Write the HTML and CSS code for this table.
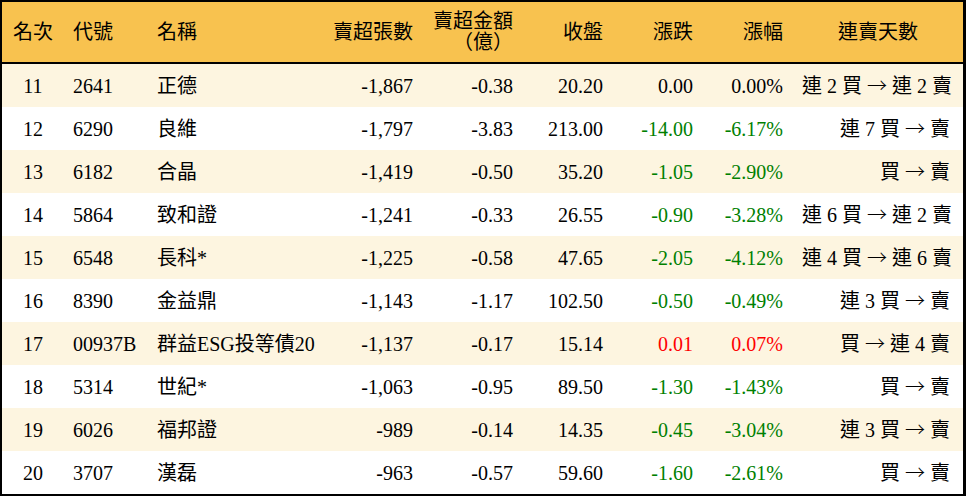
FILE: index.html
```html
<!DOCTYPE html>
<html lang="zh-Hant">
<head>
<meta charset="utf-8">
<link rel="stylesheet" href="styles.css">
</head>
<body>
<table class="rank">
  <colgroup>
    <col class="c1"><col class="c2"><col class="c3"><col class="c4"><col class="c5"><col class="c6"><col class="c7"><col class="c8"><col class="c9">
  </colgroup>
  <thead>
    <tr>
      <th class="ctr">名次</th>
      <th class="lft">代號</th>
      <th class="lft">名稱</th>
      <th class="rgt">賣超張數</th>
      <th class="rgt">賣超金額<br>（億）</th>
      <th class="rgt">收盤</th>
      <th class="rgt">漲跌</th>
      <th class="rgt">漲幅</th>
      <th class="ctr">連賣天數</th>
    </tr>
  </thead>
  <tbody>
    <tr><td class="ctr">11</td><td class="lft">2641</td><td class="lft">正德</td><td class="rgt">-1,867</td><td class="rgt">-0.38</td><td class="rgt">20.20</td><td class="rgt">0.00</td><td class="rgt">0.00%</td><td class="rgt days">連 2 買 <span class="arr">→</span> 連 2 賣</td></tr>
    <tr><td class="ctr">12</td><td class="lft">6290</td><td class="lft">良維</td><td class="rgt">-1,797</td><td class="rgt">-3.83</td><td class="rgt">213.00</td><td class="rgt dn">-14.00</td><td class="rgt dn">-6.17%</td><td class="rgt days">連 7 買 <span class="arr">→</span> 賣</td></tr>
    <tr><td class="ctr">13</td><td class="lft">6182</td><td class="lft">合晶</td><td class="rgt">-1,419</td><td class="rgt">-0.50</td><td class="rgt">35.20</td><td class="rgt dn">-1.05</td><td class="rgt dn">-2.90%</td><td class="rgt days">買 <span class="arr">→</span> 賣</td></tr>
    <tr><td class="ctr">14</td><td class="lft">5864</td><td class="lft">致和證</td><td class="rgt">-1,241</td><td class="rgt">-0.33</td><td class="rgt">26.55</td><td class="rgt dn">-0.90</td><td class="rgt dn">-3.28%</td><td class="rgt days">連 6 買 <span class="arr">→</span> 連 2 賣</td></tr>
    <tr><td class="ctr">15</td><td class="lft">6548</td><td class="lft">長科*</td><td class="rgt">-1,225</td><td class="rgt">-0.58</td><td class="rgt">47.65</td><td class="rgt dn">-2.05</td><td class="rgt dn">-4.12%</td><td class="rgt days">連 4 買 <span class="arr">→</span> 連 6 賣</td></tr>
    <tr><td class="ctr">16</td><td class="lft">8390</td><td class="lft">金益鼎</td><td class="rgt">-1,143</td><td class="rgt">-1.17</td><td class="rgt">102.50</td><td class="rgt dn">-0.50</td><td class="rgt dn">-0.49%</td><td class="rgt days">連 3 買 <span class="arr">→</span> 賣</td></tr>
    <tr><td class="ctr">17</td><td class="lft">00937B</td><td class="lft">群益ESG投等債20</td><td class="rgt">-1,137</td><td class="rgt">-0.17</td><td class="rgt">15.14</td><td class="rgt up">0.01</td><td class="rgt up">0.07%</td><td class="rgt days">買 <span class="arr">→</span> 連 4 賣</td></tr>
    <tr><td class="ctr">18</td><td class="lft">5314</td><td class="lft">世紀*</td><td class="rgt">-1,063</td><td class="rgt">-0.95</td><td class="rgt">89.50</td><td class="rgt dn">-1.30</td><td class="rgt dn">-1.43%</td><td class="rgt days">買 <span class="arr">→</span> 賣</td></tr>
    <tr><td class="ctr">19</td><td class="lft">6026</td><td class="lft">福邦證</td><td class="rgt">-989</td><td class="rgt">-0.14</td><td class="rgt">14.35</td><td class="rgt dn">-0.45</td><td class="rgt dn">-3.04%</td><td class="rgt days">連 3 買 <span class="arr">→</span> 賣</td></tr>
    <tr><td class="ctr">20</td><td class="lft">3707</td><td class="lft">漢磊</td><td class="rgt">-963</td><td class="rgt">-0.57</td><td class="rgt">59.60</td><td class="rgt dn">-1.60</td><td class="rgt dn">-2.61%</td><td class="rgt days">買 <span class="arr">→</span> 賣</td></tr>
  </tbody>
</table>
</body>
</html>
```

FILE: styles.css
```css
html, body {
  margin: 0;
  padding: 0;
  background: #ffffff;
}

body {
  font-family: "Liberation Serif", "Noto Sans CJK TC", serif;
  font-size: 20px;
  color: #000000;
}

.rank {
  border-collapse: separate;
  border-spacing: 0;
  table-layout: fixed;
  width: 966px;
  border-top: 2px solid #000;
  border-left: 2px solid #000;
  border-right: 3px solid #000;
  border-bottom: 2px solid #000;
}

.c1 { width: 62px; }
.c2 { width: 84px; }
.c3 { width: 182px; }
.c4 { width: 93px; }
.c5 { width: 100px; }
.c6 { width: 90px; }
.c7 { width: 90px; }
.c8 { width: 90px; }
.c9 { width: 170px; }

.rank th {
  background: #f8c24f;
  height: 60px;
  padding: 0 10px 0 9px;
  font-weight: normal;
  line-height: 21px;
  border-bottom: 2px solid #000;
  vertical-align: middle;
  white-space: nowrap;
  text-spacing-trim: space-all;
}

.rank td {
  height: 43px;
  padding: 0 10px 0 9px;
  vertical-align: middle;
  white-space: nowrap;
  line-height: 24px;
}

.rank tbody tr:nth-child(odd) td {
  background: #fdf5e0;
}

.rank .ctr { text-align: center; padding-left: 0; padding-right: 0; }
.rank .lft { text-align: left; }
.rank .rgt { text-align: right; }
.rank th.rgt { padding-left: 0; }
.rank .days { padding-right: 13px; }

.arr {
  font-family: "Noto Sans CJK TC", sans-serif;
  font-weight: 300;
}

.dn { color: #008000; }
.up { color: #ff0000; }
```
